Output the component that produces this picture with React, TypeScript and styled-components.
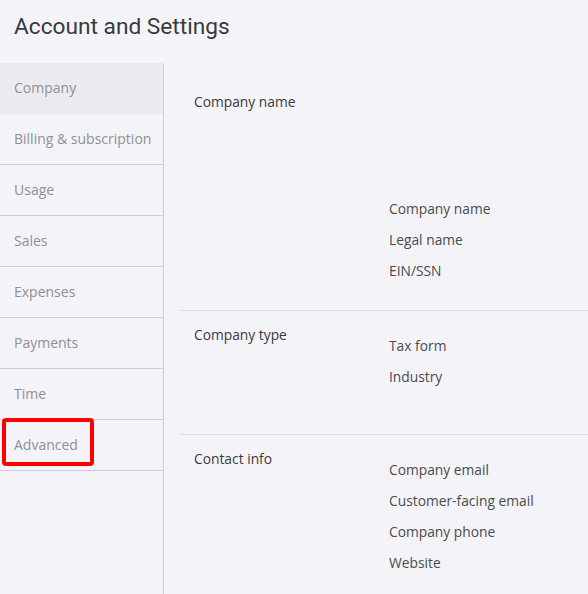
import React from 'react';
import styled, { createGlobalStyle } from 'styled-components';

const GlobalStyle = createGlobalStyle`
  html, body {
    margin: 0;
    padding: 0;
    background: #f4f4f8;
  }
  body {
    font-family: "Open Sans", "Liberation Sans", sans-serif;
  }
`;

const Page = styled.div`
  display: flex;
  flex-direction: column;
  min-height: 100vh;
  background: #f4f4f8;
`;

const Title = styled.h1`
  margin: 0;
  padding: 12px 14px 21px;
  font-family: Roboto, "Liberation Sans", sans-serif;
  font-size: 22.7px;
  font-weight: 400;
  line-height: 30px;
  color: #393a3d;
`;

const Body = styled.div`
  flex: 1;
  display: flex;
`;

const Sidebar = styled.nav`
  width: 163px;
  flex-shrink: 0;
  border-right: 1px solid #cfcfd3;
`;

const NavItem = styled.div<{ $active?: boolean }>`
  position: relative;
  box-sizing: border-box;
  height: 50px;
  display: flex;
  align-items: center;
  padding: 0 0 2px 14px;
  font-size: 14px;
  color: #8d9096;
  background: ${(p) => (p.$active ? '#ebebef' : 'transparent')};
  border-bottom: ${(p) => (p.$active ? '1px solid transparent' : '1px solid #cfcfd3')};
  box-sizing: content-box;
  height: 48px;
`;

const Highlight = styled.span`
  position: absolute;
  left: 2px;
  top: -2px;
  width: 84px;
  height: 40px;
  border: 4px solid #ff0000;
  border-radius: 4px;
`;

const Content = styled.main`
  flex: 1;
  padding-top: 15px;
  padding-left: 15px;
`;

const Section = styled.section<{ $bottom: number; $divider?: boolean }>`
  display: grid;
  grid-template-columns: 210px 1fr;
  padding: 14px 0 ${(p) => p.$bottom}px;
  border-top: ${(p) => (p.$divider ? '1px solid #dcdcdf' : 'none')};
`;

const Label = styled.div`
  padding-left: 15px;
  font-size: 13.8px;
  line-height: 20px;
  color: #393a3d;
`;

const Fields = styled.div`
  margin-top: 5px;
  display: flex;
  flex-direction: column;
`;

const LogoSlot = styled.div`
  height: 96px;
`;

const Field = styled.div`
  font-size: 13.8px;
  line-height: 31px;
  color: #4a4b4e;
`;

const navItems = ['Company', 'Billing & subscription', 'Usage', 'Sales', 'Expenses', 'Payments', 'Time', 'Advanced'];

const sections = [
  { label: 'Company name', fields: ['Company name', 'Legal name', 'EIN/SSN'], logo: true, bottom: 24 },
  { label: 'Company type', fields: ['Tax form', 'Industry'], bottom: 42 },
  { label: 'Contact info', fields: ['Company email', 'Customer-facing email', 'Company phone', 'Website'], bottom: 20 },
];

export default function App() {
  return (
    <Page>
      <GlobalStyle />
      <Title>Account and Settings</Title>
      <Body>
        <Sidebar>
          {navItems.map((item) => (
            <NavItem key={item} $active={item === 'Company'}>
              {item}
              {item === 'Advanced' && <Highlight />}
            </NavItem>
          ))}
        </Sidebar>
        <Content>
          {sections.map((s, i) => (
            <Section key={s.label} $bottom={s.bottom} $divider={i > 0}>
              <Label>{s.label}</Label>
              <Fields>
                {s.logo && <LogoSlot />}
                {s.fields.map((f) => (
                  <Field key={f}>{f}</Field>
                ))}
              </Fields>
            </Section>
          ))}
        </Content>
      </Body>
    </Page>
  );
}
